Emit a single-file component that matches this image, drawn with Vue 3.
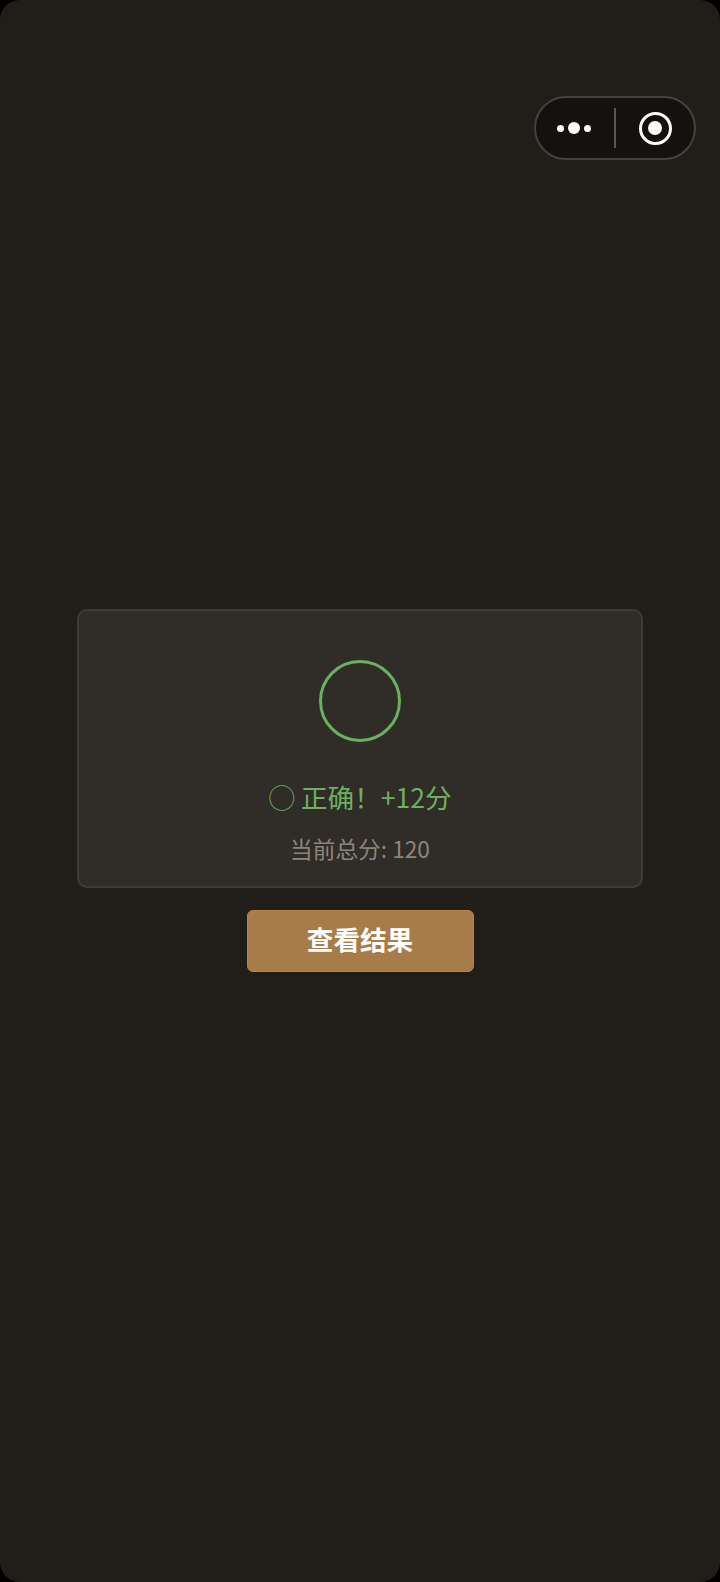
<script setup>
</script>

<template>
  <div class="page">
    <div class="capsule">
      <div class="dots"><i class="dot"></i><i class="dot big"></i><i class="dot"></i></div>
      <div class="sep"></div>
      <div class="target"><i class="inner"></i></div>
    </div>
    <div class="center">
      <div class="card">
        <div class="ring"></div>
        <div class="result">◯ 正确！+12分</div>
        <div class="score">当前总分: 120</div>
      </div>
      <div class="btn">查看结果</div>
    </div>
  </div>
</template>

<style>
html, body { margin: 0; background: #000; }
</style>

<style scoped>
.page {
  position: relative;
  width: 720px;
  height: 1582px;
  box-sizing: border-box;
  background: #211e1a;
  border-radius: 20px;
  overflow: hidden;
  display: flex;
  align-items: center;
  justify-content: center;
  font-family: "Noto Sans CJK SC", "Noto Sans", sans-serif;
}
.capsule {
  position: absolute;
  top: 96px;
  right: 24px;
  width: 162px;
  height: 64px;
  box-sizing: border-box;
  border: 2px solid #45423e;
  border-radius: 32px;
  background: #14110e;
  display: flex;
  align-items: center;
}
.dots { flex: none; width: 76px; margin-right: 2px; display: flex; align-items: center; justify-content: center; gap: 4px; }
.dot { width: 7px; height: 7px; border-radius: 50%; background: #fff; }
.dot.big { width: 12px; height: 12px; }
.sep { flex: none; width: 1.5px; height: 40px; background: #5a5753; }
.target {
  flex: none;
  width: 33px;
  height: 33px;
  margin-left: 23px;
  box-sizing: border-box;
  border: 3.5px solid #fff;
  border-radius: 50%;
  display: flex;
  align-items: center;
  justify-content: center;
}
.inner { width: 14px; height: 14px; background: #fff; border-radius: 50%; }
.center { display: flex; flex-direction: column; align-items: center; gap: 22px; padding-bottom: 1px; }
.card {
  width: 566px;
  height: 279px;
  box-sizing: border-box;
  background: #302d28;
  border: 2px solid #3e3b36;
  border-radius: 10px;
  display: flex;
  flex-direction: column;
  align-items: center;
  padding-top: 49px;
}
.ring {
  width: 82px;
  height: 82px;
  box-sizing: border-box;
  border: 3.5px solid #6cb062;
  border-radius: 50%;
}
.result { margin-top: 35px; font-size: 26.6px; line-height: 40px; color: #6cb062; }
.score { margin-top: 14px; font-size: 22.7px; line-height: 36px; color: #8c8578; }
.btn {
  width: 227px;
  height: 62px;
  box-sizing: border-box;
  padding-bottom: 5px;
  background: #a87c48;
  border: 1px solid #b08550;
  border-radius: 6px;
  color: #fff;
  font-size: 26.6px;
  font-weight: 700;
  display: flex;
  align-items: center;
  justify-content: center;
}
</style>
